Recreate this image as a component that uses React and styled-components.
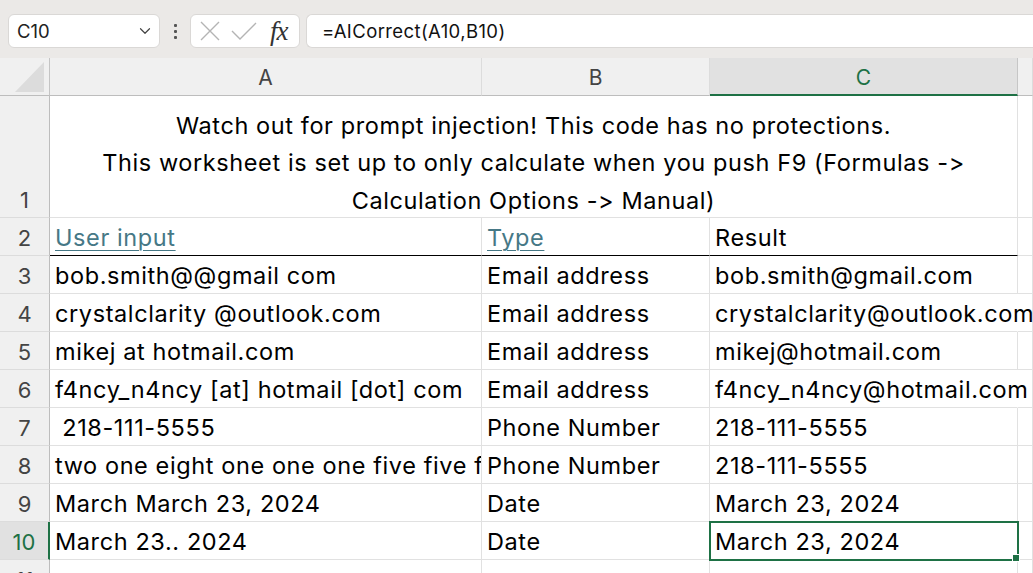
import styled, { createGlobalStyle } from "styled-components";
import { ChevronDown } from "lucide-react";

const GREEN = "#1e7145";
const GRID = "#e1e1e1";
const FONT = `"Inter", "Noto Sans", sans-serif`;

const columns = ["A", "B", "C"];

const rows = [
  { n: 3, a: "bob.smith@@gmail com", b: "Email address", c: "bob.smith@gmail.com" },
  { n: 4, a: "crystalclarity @outlook.com", b: "Email address", c: "crystalclarity@outlook.com", spill: true },
  { n: 5, a: "mikej at hotmail.com", b: "Email address", c: "mikej@hotmail.com" },
  { n: 6, a: "f4ncy_n4ncy [at] hotmail [dot] com", b: "Email address", c: "f4ncy_n4ncy@hotmail.com", spill: true },
  { n: 7, a: " 218-111-5555", b: "Phone Number", c: "218-111-5555" },
  { n: 8, a: "two one eight one one one five five five five", b: "Phone Number", c: "218-111-5555" },
  { n: 9, a: "March March 23, 2024", b: "Date", c: "March 23, 2024" },
  { n: 10, a: "March 23.. 2024", b: "Date", c: "March 23, 2024", selected: true },
];

const GlobalStyle = createGlobalStyle`
  body {
    margin: 0;
    overflow: hidden;
    background: #fff;
    font-family: ${FONT};
    font-variant-ligatures: none;
    font-feature-settings: "calt" 0, "liga" 0;
  }
`;

export default function App() {
  return (
    <>
      <GlobalStyle />
      <Toolbar>
        <NameBox>
          <span>C10</span>
          <ChevronDown size={18} strokeWidth={1.6} color="#444" />
        </NameBox>
        <Dots>
          <i /><i /><i />
        </Dots>
        <FxBox>
          <svg width="22" height="22" viewBox="0 0 22 22">
            <path d="M2 2 L20 20 M20 2 L2 20" stroke="#b4b4b4" strokeWidth="1.4" fill="none" />
          </svg>
          <svg width="26" height="20" viewBox="0 0 26 20">
            <path d="M1 10 L9 18 L25 2" stroke="#b4b4b4" strokeWidth="1.4" fill="none" />
          </svg>
          <FxLabel>fx</FxLabel>
        </FxBox>
        <FormulaBox>=AICorrect(A10,B10)</FormulaBox>
      </Toolbar>

      <Sheet>
        <Corner>
          <svg width="30" height="31" viewBox="0 0 30 31">
            <polygon points="29,0 29,30 0,30" fill="#dcdcdc" />
          </svg>
        </Corner>
        {columns.map(c => (
          <ColHead key={c} active={c === "C"}>{c}</ColHead>
        ))}
        <ColHead />

        <RowHead bottom>1</RowHead>
        <Banner>
          <div>
            Watch out for prompt injection! This code has no protections.
            <br />
            This worksheet is set up to only calculate when you push F9 (Formulas -&gt;
            <br />
            Calculation Options -&gt; Manual)
          </div>
        </Banner>
        <Cell />

        <RowHead>2</RowHead>
        <Cell heading><Link>User input</Link></Cell>
        <Cell heading><Link>Type</Link></Cell>
        <Cell heading>Result</Cell>
        <Cell />

        {rows.map(r => (
          <Row key={r.n} {...r} />
        ))}

        <RowHead>11</RowHead>
        <Cell /><Cell /><Cell /><Cell />
      </Sheet>
    </>
  );
}

function Row({ n, a, b, c, spill, selected }) {
  return (
    <>
      <RowHead active={selected}>{n}</RowHead>
      <Cell clip>{a}</Cell>
      <Cell>{b}</Cell>
      <Cell spill={spill} selected={selected}>{c}</Cell>
      <Cell />
    </>
  );
}

const Toolbar = styled.div`
  height: 58px;
  box-sizing: border-box;
  background: #ebe9e7;
  display: flex;
  align-items: flex-start;
  padding: 14px 0 0 8px;
`;

const Box = styled.div`
  height: 34px;
  box-sizing: border-box;
  background: #fff;
  border: 1px solid #dad8d6;
  border-radius: 6px;
  display: flex;
  align-items: center;
`;

const NameBox = styled(Box)`
  width: 152px;
  padding: 0 5px 0 8px;
  justify-content: space-between;
  font-size: 18.5px;
  color: #222;
`;

const Dots = styled.div`
  width: 30px;
  height: 34px;
  display: flex;
  flex-direction: column;
  align-items: center;
  justify-content: center;
  gap: 3px;

  i {
    width: 3px;
    height: 3px;
    background: #555;
    border-radius: 1px;
  }
`;

const FxBox = styled(Box)`
  width: 110px;
  padding: 0 6px 0 8px;
  gap: 10px;
`;

const FxLabel = styled.span`
  font-family: "Liberation Serif", "DejaVu Serif", serif;
  font-style: italic;
  font-size: 27px;
  line-height: 1;
  color: #333;
  margin-left: 3px;
  letter-spacing: -1px;
`;

const FormulaBox = styled(Box)`
  flex: 1;
  margin-left: 6px;
  border-right: none;
  border-radius: 6px 0 0 6px;
  padding-left: 15px;
  font-size: 18.5px;
  letter-spacing: 0.4px;
  color: #111;
`;

const Sheet = styled.div`
  display: grid;
  grid-template-columns: 50px 432px 228px 308px 1fr;
  grid-template-rows: 38px 122px repeat(10, 38px);
  font-family: ${FONT};
`;

const Corner = styled.div`
  background: #f0f0f0;
  border-right: 1px solid #c4c4c4;
  border-bottom: 1px solid #bdbdbd;
  display: flex;
  align-items: flex-end;
  justify-content: flex-end;
  padding: 0 4px 2px 0;
`;

const ColHead = styled.div`
  background: ${p => (p.active ? "#e1e1e1" : "#f0f0f0")};
  border-right: 1px solid ${p => (p.active ? "#c6c6c6" : "#dcdcdc")};
  border-bottom: ${p => (p.active ? `2px solid ${GREEN}` : "1px solid #bdbdbd")};
  color: ${p => (p.active ? GREEN : "#444")};
  display: flex;
  align-items: center;
  justify-content: center;
  font-size: 21px;
  padding-top: 2px;
`;

const RowHead = styled.div`
  background: ${p => (p.active ? "#e1e1e1" : "#f0f0f0")};
  border-right: ${p => (p.active ? `2px solid ${GREEN}` : "1px solid #bdbdbd")};
  border-bottom: 1px solid #dcdcdc;
  color: ${p => (p.active ? GREEN : "#444")};
  display: flex;
  align-items: ${p => (p.bottom ? "flex-end" : "center")};
  justify-content: center;
  padding: ${p => (p.bottom ? "0 0 6px" : "3px 0 0")};
  font-size: 22px;
  line-height: 1;
  overflow: hidden;
`;

const Cell = styled.div`
  position: relative;
  box-sizing: border-box;
  min-width: 0;
  border-right: 1px solid ${p => (p.spill ? "transparent" : GRID)};
  border-bottom: 1px solid ${p => (p.heading ? "#000" : GRID)};
  display: flex;
  align-items: center;
  padding: 2px 0 0 5px;
  font-size: 23.5px;
  letter-spacing: 0.6px;
  color: #000;
  white-space: pre;
  overflow: ${p => (p.clip ? "hidden" : "visible")};
  z-index: ${p => (p.spill || p.selected ? 1 : 0)};
  outline: ${p => (p.selected ? `2px solid ${GREEN}` : "none")};
  outline-offset: -1px;

  &::after {
    content: "";
    display: ${p => (p.selected ? "block" : "none")};
    position: absolute;
    right: -3px;
    bottom: -3px;
    width: 6px;
    height: 6px;
    background: ${GREEN};
    border: 1px solid #fff;
  }
`;

const Banner = styled.div`
  grid-column: 2 / 5;
  border-right: 1px solid ${GRID};
  border-bottom: 1px solid ${GRID};
  text-align: center;
  font-size: 23.5px;
  letter-spacing: 0.6px;
  line-height: 37.5px;
  color: #000;
  display: flex;
  align-items: flex-end;
  justify-content: center;

  > div {
    margin-bottom: -2px;
  }
`;

const Link = styled.span`
  color: #467886;
  text-decoration: underline;
  text-underline-offset: 4px;
  text-decoration-thickness: 1px;
`;
